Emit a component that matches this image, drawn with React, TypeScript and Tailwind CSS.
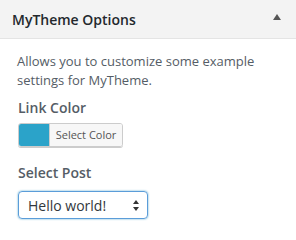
export default function App() {
  return (
    <div className="w-[296px] h-[240px] bg-white font-['Open_Sans',sans-serif] overflow-hidden">
      <div className="h-[39px] bg-[#f3f3f3] border-b border-[#e4e4e4] flex items-center justify-between pl-3 pr-[15px]">
        <span className="text-[14px] font-semibold text-[#23282d]">MyTheme Options</span>
        <svg width="8" height="6" viewBox="0 0 8 6" className="mb-[4px]">
          <path d="M4 0 L8 6 L0 6 Z" fill="#555" />
        </svg>
      </div>
      <div className="px-[18px] pt-[13px]">
        <p className="text-[13px] leading-[19px] text-[#555d66] -ml-[1px]">
          Allows you to customize some example settings for MyTheme.
        </p>
        <div className="mt-[8px] text-[14px] font-semibold text-[#555d66] leading-[20px]">Link Color</div>
        <div className="mt-[5px] flex h-[24px] w-[105px] rounded-[3px] border border-[#ccc] overflow-hidden shadow-[0_1px_0_#ccc]">
          <div className="w-[30px] bg-[#2ba3c9]" />
          <div className="flex-1 bg-[#f7f7f7] border-l border-[#ccc] text-[11px] text-[#555] flex items-center justify-center">
            Select Color
          </div>
        </div>
        <div className="mt-[16px] text-[14px] font-semibold text-[#555d66] leading-[20px]">Select Post</div>
        <div className="mt-[8px] w-[130px] h-[28px] rounded-[4px] border border-[#5b9dd9] shadow-[0_0_2px_rgba(30,140,190,0.8)] flex items-center justify-between pl-[9px] pr-[8px]">
          <span className="text-[14px] text-[#32373c]">Hello world!</span>
          <svg width="6" height="11" viewBox="0 0 6 11">
            <path d="M3 0 L6 4 L0 4 Z M3 11 L6 7 L0 7 Z" fill="#333" />
          </svg>
        </div>
      </div>
    </div>
  );
}
